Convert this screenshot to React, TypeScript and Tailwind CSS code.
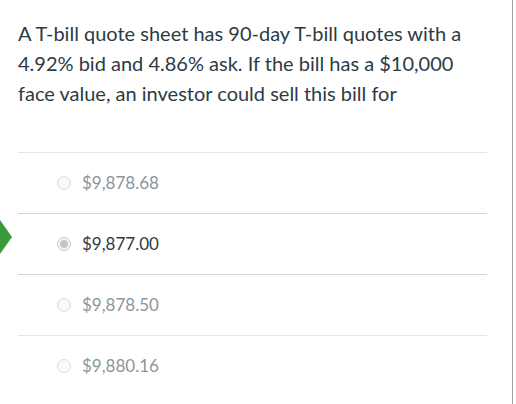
const options = [
  { label: "$9,878.68", selected: false },
  { label: "$9,877.00", selected: true },
  { label: "$9,878.50", selected: false },
  { label: "$9,880.16", selected: false },
];

function Radio({ selected }: { selected: boolean }) {
  return (
    <span
      className={
        selected
          ? "flex h-[14px] w-[14px] shrink-0 items-center justify-center rounded-full border border-[#c9c9c9] bg-[#f4f4f4]"
          : "h-[14px] w-[14px] shrink-0 rounded-full border border-[#dcdcdc] bg-[#fafafa]"
      }
    >
      {selected && <span className="h-[8px] w-[8px] rounded-full bg-[#c4c4c4]" />}
    </span>
  );
}

export default function App() {
  return (
    <div className="relative h-[404px] w-[516px] overflow-hidden bg-white font-['Lato','Noto_Sans',sans-serif]">
      <div className="h-full w-[513px] border-r border-[#a0a0a0]">
        <p className="px-[18px] pt-[18px] text-[20px] leading-[30px] text-[#2d3b45]">
          A T-bill quote sheet has 90-day T-bill quotes with a 4.92% bid and 4.86% ask. If the bill has a $10,000 face value, an investor could sell this bill for
        </p>
        <div className="ml-[18px] mt-[44px] w-[469px]">
          {options.map((o, i) => (
            <div
              key={o.label}
              className={
                "box-content flex h-[60px] items-center gap-[11px] pl-[39px] " +
                (i === 0 ? "border-t border-[#e6e6e6] " : "") +
                (i < 3 ? "border-b " : "") +
                (i === 0 || i === 1 ? "border-b-[#d4d4d4]" : "border-b-[#e6e6e6]")
              }
            >
              <Radio selected={o.selected} />
              <span className={"text-[17px] " + (o.selected ? "text-[#2d3b45]" : "text-[#8b969e]")}>
                {o.label}
              </span>
            </div>
          ))}
        </div>
      </div>
      <svg className="absolute left-0 top-[220px]" width="13" height="36" viewBox="0 0 13 36">
        <polygon points="0,0 12,17 0,34" fill="#3b9a3b" />
      </svg>
    </div>
  );
}
